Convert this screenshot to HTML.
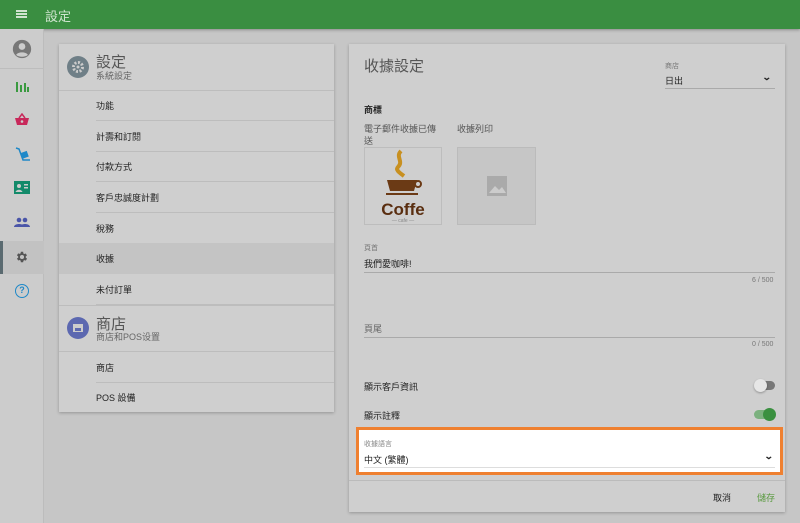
<!DOCTYPE html>
<html><head><meta charset="utf-8"><style>
*{box-sizing:border-box;margin:0;padding:0}
body{width:800px;height:523px;overflow:hidden;background:#c6c6c6;font-family:"Liberation Sans","Noto Sans CJK TC",sans-serif;color:#222;position:relative}
.a{position:absolute}
.hdr{left:0;top:0;width:800px;height:29px;background:#3a8e41;box-shadow:0 1px 3px rgba(0,0,0,.3)}
.side{left:0;top:29px;width:44px;height:494px;background:#cccccc;border-right:1px solid #bcbcbc}
.card{background:#cfcfcf;box-shadow:0 1px 3px rgba(0,0,0,.25)}
.t{font-size:9px;white-space:nowrap}
.ln{height:1px;background:#bdbdbd}
</style></head><body>
<div class="a hdr"></div>
<div class="a" style="left:16px;top:10px;width:11px;height:2px;background:#cfe4cf;box-shadow:0 3px 0 #cfe4cf,0 6px 0 #cfe4cf"></div>
<div class="a" style="left:45px;top:6px;font-size:13px;color:#cfe4cf">設定</div>
<div class="a side"></div>
<div class="a ln" style="left:0;top:68px;width:44px"></div>
<div class="a" style="left:0;top:241px;width:44px;height:33px;background:#c2c2c2"></div>
<div class="a" style="left:0;top:241px;width:3px;height:33px;background:#5a6a70"></div>
<svg class="a" style="left:12px;top:39px" width="20" height="20" viewBox="0 0 24 24"><circle cx="12" cy="12" r="11" fill="#777"/><circle cx="12" cy="9" r="4" fill="#ccc"/><path d="M5 19c2-4 12-4 14 0c-3 3-11 3-14 0z" fill="#ccc"/></svg>
<svg class="a" style="left:15px;top:80px" width="14" height="12"><rect x="1" y="2" width="2" height="10" fill="#3a9a40"/><rect x="5" y="5" width="2" height="7" fill="#3a9a40"/><rect x="9" y="3" width="2" height="9" fill="#3a9a40"/><rect x="12" y="7" width="2" height="5" fill="#3a9a40"/></svg>
<svg class="a" style="left:14px;top:113px" width="16" height="13" viewBox="0 0 16 13"><path d="M5 5L8 1L11 5" stroke="#c8285a" fill="none" stroke-width="1.5"/><path d="M1 5h14l-2 7H3z" fill="#c8285a"/><circle cx="8" cy="8.5" r="1.3" fill="#ccc"/></svg>
<svg class="a" style="left:15px;top:147px" width="16" height="16" viewBox="0 0 16 16"><path d="M1 1l3 1 4 11h7" stroke="#1e88c8" fill="none" stroke-width="1.5"/><rect x="6" y="5" width="7" height="6" fill="#1e88c8" transform="rotate(-20 9 8)"/></svg>
<svg class="a" style="left:14px;top:181px" width="16" height="13"><rect width="16" height="13" fill="#138a6a"/><circle cx="5" cy="5" r="2" fill="#ccc"/><path d="M1.5 11c1-3 6-3 7 0z" fill="#ccc"/><rect x="10" y="3" width="4" height="1.5" fill="#ccc"/><rect x="10" y="6" width="4" height="1.5" fill="#ccc"/></svg>
<svg class="a" style="left:14px;top:217px" width="16" height="10"><circle cx="5" cy="3" r="2.3" fill="#4a55a8"/><circle cx="11" cy="3" r="2.3" fill="#4a55a8"/><path d="M0 10c0-4 10-4 10 0zM6 10c0-4 10-4 10 0z" fill="#4a55a8"/></svg>
<svg class="a" style="left:15px;top:250px" width="14" height="14" viewBox="0 0 24 24"><path fill="#555" d="M19.4 13a7.5 7.5 0 0 0 0-2l2.1-1.6-2-3.5-2.5 1a7 7 0 0 0-1.7-1L15 3h-4l-.4 2.7a7 7 0 0 0-1.7 1l-2.5-1-2 3.5L6.5 11a7.5 7.5 0 0 0 0 2l-2.1 1.6 2 3.5 2.5-1a7 7 0 0 0 1.7 1L11 21h4l.4-2.7a7 7 0 0 0 1.7-1l2.5 1 2-3.5zM13 15.5a3.5 3.5 0 1 1 0-7 3.5 3.5 0 0 1 0 7z" transform="translate(-1 0)"/></svg>
<div class="a" style="left:15px;top:284px;width:14px;height:14px;border:1.6px solid #1e88c8;border-radius:50%;color:#1e88c8;font-size:9px;font-weight:bold;text-align:center;line-height:11px">?</div>

<div class="a card" style="left:59px;top:44px;width:275px;height:368px"></div>
<svg class="a" style="left:67px;top:56px" width="22" height="22" viewBox="0 0 22 22"><circle cx="11" cy="11" r="11" fill="#6f7f87"/><circle cx="11" cy="11" r="4.5" fill="none" stroke="#ccc" stroke-width="3" stroke-dasharray="2 1.5"/><circle cx="11" cy="11" r="1.5" fill="#ccc"/></svg>
<div class="a" style="left:96px;top:51px;font-size:15px;color:#555">設定</div>
<div class="a t" style="left:96px;top:69px;color:#666">系統設定</div>
<div class="a ln" style="left:59px;top:90px;width:275px"></div>
<div class="a" style="left:59px;top:243px;width:275px;height:31px;background:#c4c4c4"></div>
<div class="a t" style="left:96px;top:99px">功能</div>
<div class="a ln" style="left:96px;top:120px;width:238px"></div>
<div class="a t" style="left:96px;top:130px">計壽和訂閱</div>
<div class="a ln" style="left:96px;top:151px;width:238px"></div>
<div class="a t" style="left:96px;top:160px">付款方式</div>
<div class="a ln" style="left:96px;top:181px;width:238px"></div>
<div class="a t" style="left:96px;top:191px">客戶忠誠度計劃</div>
<div class="a ln" style="left:96px;top:212px;width:238px"></div>
<div class="a t" style="left:96px;top:222px">稅務</div>
<div class="a t" style="left:96px;top:252px">收據</div>
<div class="a t" style="left:96px;top:283px">未付訂單</div>
<div class="a ln" style="left:96px;top:304px;width:238px"></div>
<div class="a ln" style="left:59px;top:305px;width:275px"></div>
<svg class="a" style="left:67px;top:317px" width="22" height="22"><circle cx="11" cy="11" r="11" fill="#5c68b0"/><rect x="6" y="7" width="10" height="8" fill="#ccc"/><rect x="8" y="11" width="6" height="3" fill="#5c68b0"/></svg>
<div class="a" style="left:96px;top:313px;font-size:15px;color:#555">商店</div>
<div class="a t" style="left:96px;top:330px;color:#666">商店和POS设置</div>
<div class="a ln" style="left:59px;top:351px;width:275px"></div>
<div class="a t" style="left:96px;top:361px">商店</div>
<div class="a ln" style="left:96px;top:382px;width:238px"></div>
<div class="a t" style="left:96px;top:391px">POS 設備</div>

<div class="a card" style="left:349px;top:44px;width:436px;height:468px"></div>
<div class="a" style="left:364px;top:55px;font-size:15px;color:#555">收據設定</div>
<div class="a" style="left:665px;top:61px;font-size:7px;color:#777">商店</div>
<div class="a t" style="left:665px;top:74px">日出</div>
<div class="a" style="left:763px;top:72px;font-size:9px;font-weight:bold;transform:scaleX(1.3)">⌄</div>
<div class="a ln" style="left:665px;top:88px;width:110px;background:#aaa"></div>
<div class="a t" style="left:364px;top:103px;font-weight:bold">商標</div>
<div class="a t" style="left:364px;top:122px;color:#555">電子郵件收據已傳</div>
<div class="a t" style="left:364px;top:134px;color:#555">送</div>
<div class="a t" style="left:457px;top:122px;color:#555">收據列印</div>
<div class="a" style="left:364px;top:147px;width:78px;height:78px;background:#cfcfcf;border:1px solid #bdbdbd"></div>
<svg class="a" style="left:370px;top:149px" width="66" height="74" viewBox="0 0 66 74"><path d="M31 2c-6 6 3 10-3 16c-3 3 2 6 6 9" stroke="#c89020" stroke-width="4" fill="none"/><path d="M17 31h30l-3 11H20z" fill="#6b3a15"/><circle cx="48" cy="35" r="3" stroke="#6b3a15" stroke-width="2" fill="none"/><rect x="16" y="44" width="32" height="2" fill="#6b3a15"/><text x="33" y="66" text-anchor="middle" font-family="Liberation Sans" font-weight="bold" font-size="17" fill="#5a2e10">Coffe</text><text x="33" y="73" text-anchor="middle" font-size="5" fill="#888">— cafe —</text></svg>
<div class="a" style="left:457px;top:147px;width:79px;height:78px;background:#c6c6c6;border:1px solid #bbb"></div>
<svg class="a" style="left:487px;top:176px" width="20" height="20"><rect width="20" height="20" fill="#aaa"/><path d="M2 17l6-7 4 4 3-3 4 6z" fill="#ccc"/></svg>
<div class="a" style="left:364px;top:243px;font-size:7px;color:#777">頁首</div>
<div class="a t" style="left:364px;top:257px">我們愛咖啡!</div>
<div class="a ln" style="left:364px;top:272px;width:411px;background:#aaa"></div>
<div class="a" style="left:752px;top:277px;font-size:7px;color:#777">6 / 500</div>
<div class="a t" style="left:364px;top:322px;color:#666">頁尾</div>
<div class="a ln" style="left:364px;top:337px;width:411px;background:#aaa"></div>
<div class="a" style="left:752px;top:341px;font-size:7px;color:#777">0 / 500</div>
<div class="a t" style="left:364px;top:380px">顯示客戶資訊</div>
<div class="a" style="left:757px;top:381px;width:18px;height:9px;border-radius:5px;background:#777"></div>
<div class="a" style="left:754px;top:379px;width:13px;height:13px;border-radius:50%;background:#e6e6e6;box-shadow:0 1px 2px rgba(0,0,0,.3)"></div>
<div class="a t" style="left:364px;top:409px">顯示註釋</div>
<div class="a" style="left:754px;top:410px;width:20px;height:9px;border-radius:5px;background:#7cb17f"></div>
<div class="a" style="left:763px;top:408px;width:13px;height:13px;border-radius:50%;background:#3a9040"></div>
<div class="a" style="left:356px;top:427px;width:427px;height:48px;background:#fff;border:3px solid #ef8030"></div>
<div class="a" style="left:364px;top:439px;font-size:7px;color:#888">收據語言</div>
<div class="a t" style="left:364px;top:453px">中文 (繁體)</div>
<div class="a" style="left:765px;top:451px;font-size:9px;font-weight:bold;transform:scaleX(1.3)">⌄</div>
<div class="a ln" style="left:364px;top:467px;width:411px;background:#ddd"></div>
<div class="a ln" style="left:349px;top:480px;width:436px;background:#bbb"></div>
<div class="a t" style="left:713px;top:491px">取消</div>
<div class="a t" style="left:757px;top:491px;color:#5a9a40">儲存</div>
</body></html>
